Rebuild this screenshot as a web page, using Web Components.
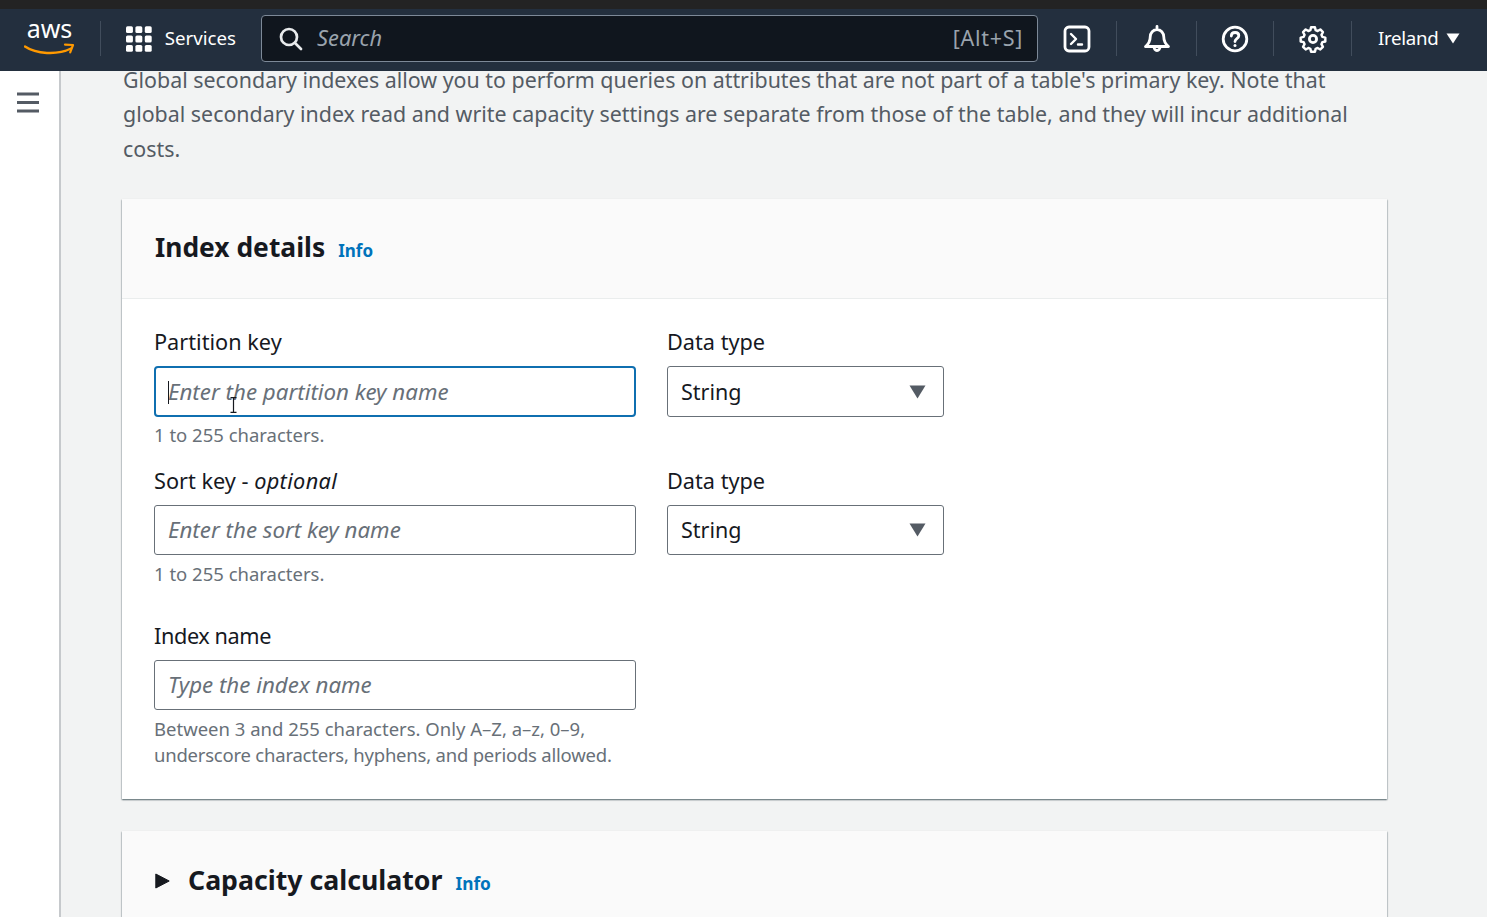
<!DOCTYPE html>
<html lang="en"><head><meta charset="utf-8"><title>Create index</title>
<style>
html,body{margin:0;height:917px;overflow:hidden;background:#f2f3f3;font-family:"Noto Sans","Open Sans",sans-serif}
body{display:flex;flex-direction:column}
app-main{flex:1;min-height:0}
</style></head><body>
<aws-topbar></aws-topbar>
<app-main>
  <index-card slot="cards" heading="Index details">
    <div style="display:grid;grid-template-columns:482px 277px;column-gap:31px;justify-content:start;align-items:start">
      <form-field label="Partition key" hint="1 to 255 characters."><text-input placeholder="Enter the partition key name" focused></text-input></form-field>
      <form-field label="Data type"><select-box value="String" tall></select-box></form-field>
      <form-field label="Sort key - " opt="optional" hint="1 to 255 characters." style="margin-top:19px"><text-input placeholder="Enter the sort key name"></text-input></form-field>
      <form-field label="Data type" style="margin-top:19px"><select-box value="String"></select-box></form-field>
      <form-field label="Index name" tight hint="Between 3 and 255 characters. Only A–Z, a–z, 0–9, &lt;span style='letter-spacing:-.22px'&gt;underscore characters, hyphens, and periods allowed.&lt;/span&gt;" style="margin-top:35px"><text-input placeholder="Type the index name"></text-input></form-field>
    </div>
  </index-card>
  <index-card slot="cards" heading="Capacity calculator" collapsed></index-card>
</app-main>
<script>
const def=(n,html)=>customElements.define(n,class extends HTMLElement{
  connectedCallback(){ if(this.shadowRoot) return; const r=this.attachShadow({mode:"open"}); r.innerHTML=html(this); }
});
const ic=(p,s=30)=>`<svg width="${s}" height="${s}" viewBox="0 0 30 30" fill="none" stroke="#fff" stroke-width="2.8" stroke-linecap="round" stroke-linejoin="round">${p}</svg>`;
def("nav-sep",()=>`<style>:host{display:block;width:1px;height:35px;background:#414d5c;flex:none}</style>`);
def("aws-topbar",()=>`<style>
:host{display:block;box-sizing:border-box;background:#232f3e;border-top:9px solid #232323;height:71px;color:#fff;position:relative;z-index:2;font-size:18.700px}
.bar{display:flex;align-items:center;height:100%;padding-bottom:3px;box-sizing:border-box}
.logo{margin-left:24px;width:51px;height:36px;position:relative;display:flex;flex-direction:column;align-items:center;flex:none}
.aws{font:400 25px/24px "Noto Sans",sans-serif;margin-top:-5px}
.svc{display:flex;align-items:center;gap:13px;margin-left:25px;width:110px;flex:none}
.svc span{position:relative;top:-1px}
.search{box-sizing:border-box;flex:none;width:777px;height:47px;margin-left:25px;background:#10161e;border:1px solid #7d8998;border-radius:4px;display:flex;align-items:center;padding:0 14px 0 16px;color:#9aa3ad}
.search i{margin-left:13px;flex:1;font-size:21.800px;position:relative;top:-1px}
.search span{font-size:21.500px;letter-spacing:.7px;position:relative;top:-1px}
.ib{display:flex;justify-content:center;align-items:center;flex:none}
.reg{display:flex;align-items:center;gap:8px;margin-left:26px;letter-spacing:-.3px}
.reg span{position:relative;top:-1px}
</style><div class="bar">
<div class="logo"><span class="aws">aws</span><svg width="51" height="13" viewBox="0 0 51 13" style="position:absolute;left:0;top:22px"><path d="M1 3.500C12 11 33 12.500 47 5.500" stroke="#f90" stroke-width="2.400" fill="none" stroke-linecap="round"/><path d="M41 1.600l8 .4-2.800 7.400" stroke="#f90" stroke-width="2.200" fill="none" stroke-linecap="round" stroke-linejoin="round"/></svg></div>
<nav-sep style="margin-left:25px"></nav-sep>
<div class="svc"><svg width="26" height="26" viewBox="0 0 26 26" fill="#fff">${[0,1,2].flatMap(y=>[0,1,2].map(x=>`<rect x="${x*9.5}" y="${y*9.5}" width="7" height="7" rx="1.600"/>`)).join("")}</svg><span>Services</span></div>
<div class="search"><svg width="26" height="26" viewBox="0 0 26 26" fill="none" stroke="#e9ebed" stroke-width="2.700" stroke-linecap="round"><circle cx="11" cy="11" r="8"/><path d="M17 17l6 6"/></svg><i>Search</i><span>[Alt+S]</span></div>
<div class="ib" style="width:78px">${ic('<rect x="3" y="3" width="24" height="24" rx="4"/><path d="M9 10l5 5-5 5M16 20.500h4" stroke-width="2.400"/>',30)}</div>
<nav-sep></nav-sep>
<div class="ib" style="width:79px">${ic('<path d="M3.500 22.500h23c-3-2.500-4.700-5-4.700-9.500 0-4-3-7.500-6.800-7.500S8.200 9 8.200 13c0 4.500-1.700 7-4.700 9.500zM15 2.500v3M12 22.500c0 2.200 1.300 4 3 4s3-1.800 3-4"/>',30)}</div>
<nav-sep></nav-sep>
<div class="ib" style="width:76px">${ic('<circle cx="15" cy="15" r="11.800"/><path d="M11.300 12c0-2.200 1.700-3.500 3.800-3.500s3.700 1.300 3.700 3.200c0 3-3.800 2.900-3.800 5.800"/><path d="M15 21.500v.1" stroke-width="3"/>',30)}</div>
<nav-sep></nav-sep>
<div class="ib" style="width:77px">${ic('<circle cx="15" cy="15" r="3.600"/><path d="M12.800 3.500h4.400l.8 3.300 2.300 1 3-1.800 3 3.100-1.700 2.900 1 2.400 3.400.8v4.400l-3.400.8-1 2.300 1.700 3-3 3-3-1.700-2.300 1-.8 3.300h-4.400l-.8-3.300-2.300-1-3 1.700-3-3 1.700-3-1-2.300-3.400-.8v-4.400l3.400-.8 1-2.400-1.700-2.900 3-3.100 3 1.800 2.300-1z" transform="translate(1.800 .2) scale(.88)"/>',30)}</div>
<nav-sep></nav-sep>
<div class="reg"><span>Ireland</span><svg width="14" height="11" viewBox="0 0 14 11"><path d="M.5 .5h13L7 10.500z" fill="#fff"/></svg></div>
</div>`);
def("app-main",()=>`<style>
:host{display:flex;color:#545b64}
.rail{box-sizing:border-box;width:61px;flex:none;background:#fff;border-right:2px solid #c6c9cc;padding:21px 0 0 17px}
.rail svg{display:block}
.content{flex:1;min-width:0;padding:0 100px 0 61px}
p{margin:-8.300px 0 32.300px 1px;font-size:21.400px;line-height:34.500px;color:#545b64}
</style><div class="rail"><svg width="23" height="21" viewBox="0 0 23 21" stroke="#545b64" stroke-width="3"><path d="M0 2h22M0 10.500h22M0 19h22"/></svg></div>
<div class="content"><p>Global secondary indexes allow you to perform queries on attributes that are not part of a table's primary key. Note that global secondary index read and write capacity settings are separate from those of the table, and they will incur additional costs.</p><slot name="cards"></slot></div>`);
def("index-card",h=>{const c=h.hasAttribute("collapsed");return `<style>
:host{display:block;background:#fff;margin-bottom:32px;box-shadow:0 1px 1.500px 0 rgba(0,28,36,.55),1px 1px 1px 0 rgba(0,28,36,.08),-1px 1px 1px 0 rgba(0,28,36,.08)}
header{background:#fafafa;height:100px;box-sizing:border-box;padding:24px 0 0 33px;display:flex;align-items:center;gap:13px;border-bottom:${c?0:"1px solid #eaeded"}}
h2{margin:0;font-size:${c?26.7:26.4}px;font-weight:700;color:#16191f;line-height:1;position:relative;top:${c?-12:-13}px}
a{color:#0073bb;font-size:${c?17.3:17}px;font-weight:700;position:relative;top:${c?-9:-10}px}
.body{padding:29px 32px 31px}
svg{position:relative;top:-12px;margin-right:5px}
</style><header>${c?'<svg width="15" height="16" viewBox="0 0 15 16"><path d="M.8 1l13.400 7-13.400 7z" fill="#16191f" stroke="#16191f" stroke-linejoin="round"/></svg>':''}<h2>${h.getAttribute("heading")}</h2><a>Info</a></header>${c?'':'<div class="body"><slot></slot></div>'}`});
def("form-field",h=>`<style>
:host{display:block}
.l{font-size:21.700px;line-height:28px;color:#16191f;margin-bottom:10px}
:host([tight]) .l{letter-spacing:-.4px}
.h{font-size:18.500px;line-height:26px;color:#687078;margin-top:6px;width:482px}
i{font-style:italic;letter-spacing:.35px}
</style><div class="l">${h.getAttribute("label")}${h.hasAttribute("opt")?`<i>${h.getAttribute("opt")}</i>`:""}</div><slot></slot>${h.hasAttribute("hint")?`<div class="h">${h.getAttribute("hint")}</div>`:""}`);
def("text-input",h=>{const f=h.hasAttribute("focused");return `<style>
:host{display:flex;box-sizing:border-box;height:50px;align-items:center;position:relative;background:#fff;border:1px solid #687078;border-radius:3px;padding-left:13px;font-size:22.300px;font-style:italic;color:#687078}
:host([focused]){height:51px;margin-bottom:-1px;border:2px solid #0f6fb0;border-radius:4px;padding-left:12px}
.caret{position:absolute;left:12px;top:13px;width:1px;height:23px;background:#16191f}
svg{position:absolute;left:73px;top:29px}
</style><span>${h.getAttribute("placeholder")}</span>${f?'<span class="caret"></span><svg width="9" height="16" viewBox="0 0 9 16" fill="none" stroke="#16191f" stroke-width="1.200"><path d="M1.500 .7h6M4.500 .7v14.600M1.500 15.300h6"/></svg>':''}`});
def("select-box",h=>`<style>
:host{display:flex;box-sizing:border-box;height:50px;align-items:center;justify-content:space-between;background:#fff;border:1px solid #687078;border-radius:3px;padding:0 17px 0 13px;font-size:21.500px;color:#16191f}
:host([tall]){height:51px}
svg{margin-top:1px}
</style><span>${h.getAttribute("value")}</span><svg width="17" height="14" viewBox="0 0 17 14"><path d="M.5 .5h16L8.500 13.500z" fill="#545b64"/></svg>`);
</script>
</body></html>
